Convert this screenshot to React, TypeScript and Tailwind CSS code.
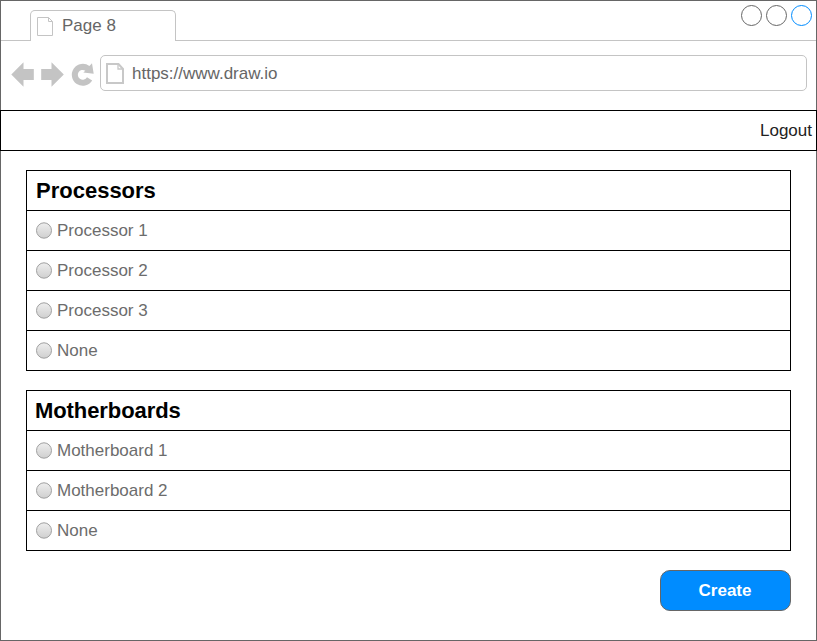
import React from 'react';

function PageIcon({ className, thick }: { className: string; thick?: boolean }) {
  return thick ? (
    <svg className={className} width="18" height="21" viewBox="0 0 18 21" fill="none" stroke="#c8c8c8">
      <path d="M1 1H12.5L17 6V20H1Z" strokeWidth="2" />
      <path d="M12 1V6H17" strokeWidth="1.3" />
    </svg>
  ) : (
    <svg className={className} width="17" height="20" viewBox="0 0 17 20" fill="none" stroke="#c4c4c4">
      <path d="M.5 .5H11.5L15.5 4.5V18.5H.5Z" />
      <path d="M11.5 .5V4.5H15.5" />
    </svg>
  );
}

function Radio() {
  return (
    <svg className="mt-[11px] mr-[5px] shrink-0" width="16" height="17" viewBox="0 0 16 17">
      <ellipse cx="8" cy="8.5" rx="7.5" ry="7.7" fill="url(#radio-fill)" stroke="#a0a0a0" />
    </svg>
  );
}

function Group({ title, items, titleClass }: { title: string; items: string[]; titleClass: string }) {
  return (
    <section className="border border-black text-[17px] text-[#6c6c6c]">
      <h2 className={`h-[39px] text-[22px] leading-[39px] font-bold text-black ${titleClass}`}>{title}</h2>
      {items.map((item) => (
        <label key={item} className="flex h-10 items-start border-t border-black pl-[9px]">
          <Radio />
          <span className="leading-[39px]">{item}</span>
        </label>
      ))}
    </section>
  );
}

export default function App() {
  return (
    <div className="flex h-[641px] w-[817px] flex-col border border-[#666666] bg-white font-['Liberation_Sans',Arial,sans-serif] text-[17px] text-[#666666]">
      <header className="flex h-10 shrink-0">
        <div className="w-[29px] border-b border-[#c4c4c4]" />
        <div className="mt-[9px] flex h-[31px] w-[146px] rounded-t-[5px] border border-b-0 border-[#c4c4c4]">
          <PageIcon className="mt-[6px] ml-[6px]" />
          <span className="ml-2 leading-[29px]">Page 8</span>
        </div>
        <div className="flex flex-1 justify-end border-b border-[#c4c4c4] pt-[3px] pr-[3px]">
          <svg width="73" height="23" viewBox="0 0 73 23" fill="none" stroke="#666666" strokeWidth="1">
            <defs>
              <linearGradient id="radio-fill" x1="0" y1="0" x2="0" y2="1">
                <stop offset="0" stopColor="#eeeeee" />
                <stop offset="1" stopColor="#cfcfcf" />
              </linearGradient>
            </defs>
            <circle cx="11.5" cy="11.5" r="10" />
            <circle cx="36.5" cy="11.5" r="10" />
            <circle cx="61.5" cy="11.5" r="10" stroke="#008cff" />
          </svg>
        </div>
      </header>
      <nav className="flex h-[69px] shrink-0 items-start pt-[14px] pr-[9px] pl-[9px]">
        <svg className="mr-[5px] shrink-0" width="85" height="36" viewBox="10 55 85 36" fill="#c4c4c4">
          <path d="M11.3 74.5L23.5 62.3V69H33.8V80H23.5V86.7Z" />
          <path d="M63.8 74.5L51.5 62.3V69H41.2V80H51.5V86.7Z" />
          <path d="M92 63.3L93.7 73.7L83.3 72.4L85.3 70.7A4.9 4.9 0 1 0 87 77.3L92.2 80.6A11 11 0 1 1 89.4 66Z" />
        </svg>
        <div className="flex h-9 w-[707px] rounded-[5px] border border-[#c4c4c4]">
          <PageIcon thick className="mt-[7px] ml-[5px]" />
          <span className="ml-2 leading-[35px]">https://www.draw.io</span>
        </div>
      </nav>
      <div className="-mx-px h-[41px] shrink-0 border border-black pr-1 text-right leading-[39px] text-[#222222]">Logout</div>
      <main className="flex flex-col gap-[19px] px-[25px] pt-[19px]">
        <Group title="Processors" titleClass="pl-[9px]" items={['Processor 1', 'Processor 2', 'Processor 3', 'None']} />
        <Group title="Motherboards" titleClass="pl-[8px] tracking-[-0.08px]" items={['Motherboard 1', 'Motherboard 2', 'None']} />
        <button className="h-[41px] w-[131px] self-end rounded-[10px] border border-[#666666] bg-[#008cff] pr-[1px] font-bold text-white">
          Create
        </button>
      </main>
    </div>
  );
}
